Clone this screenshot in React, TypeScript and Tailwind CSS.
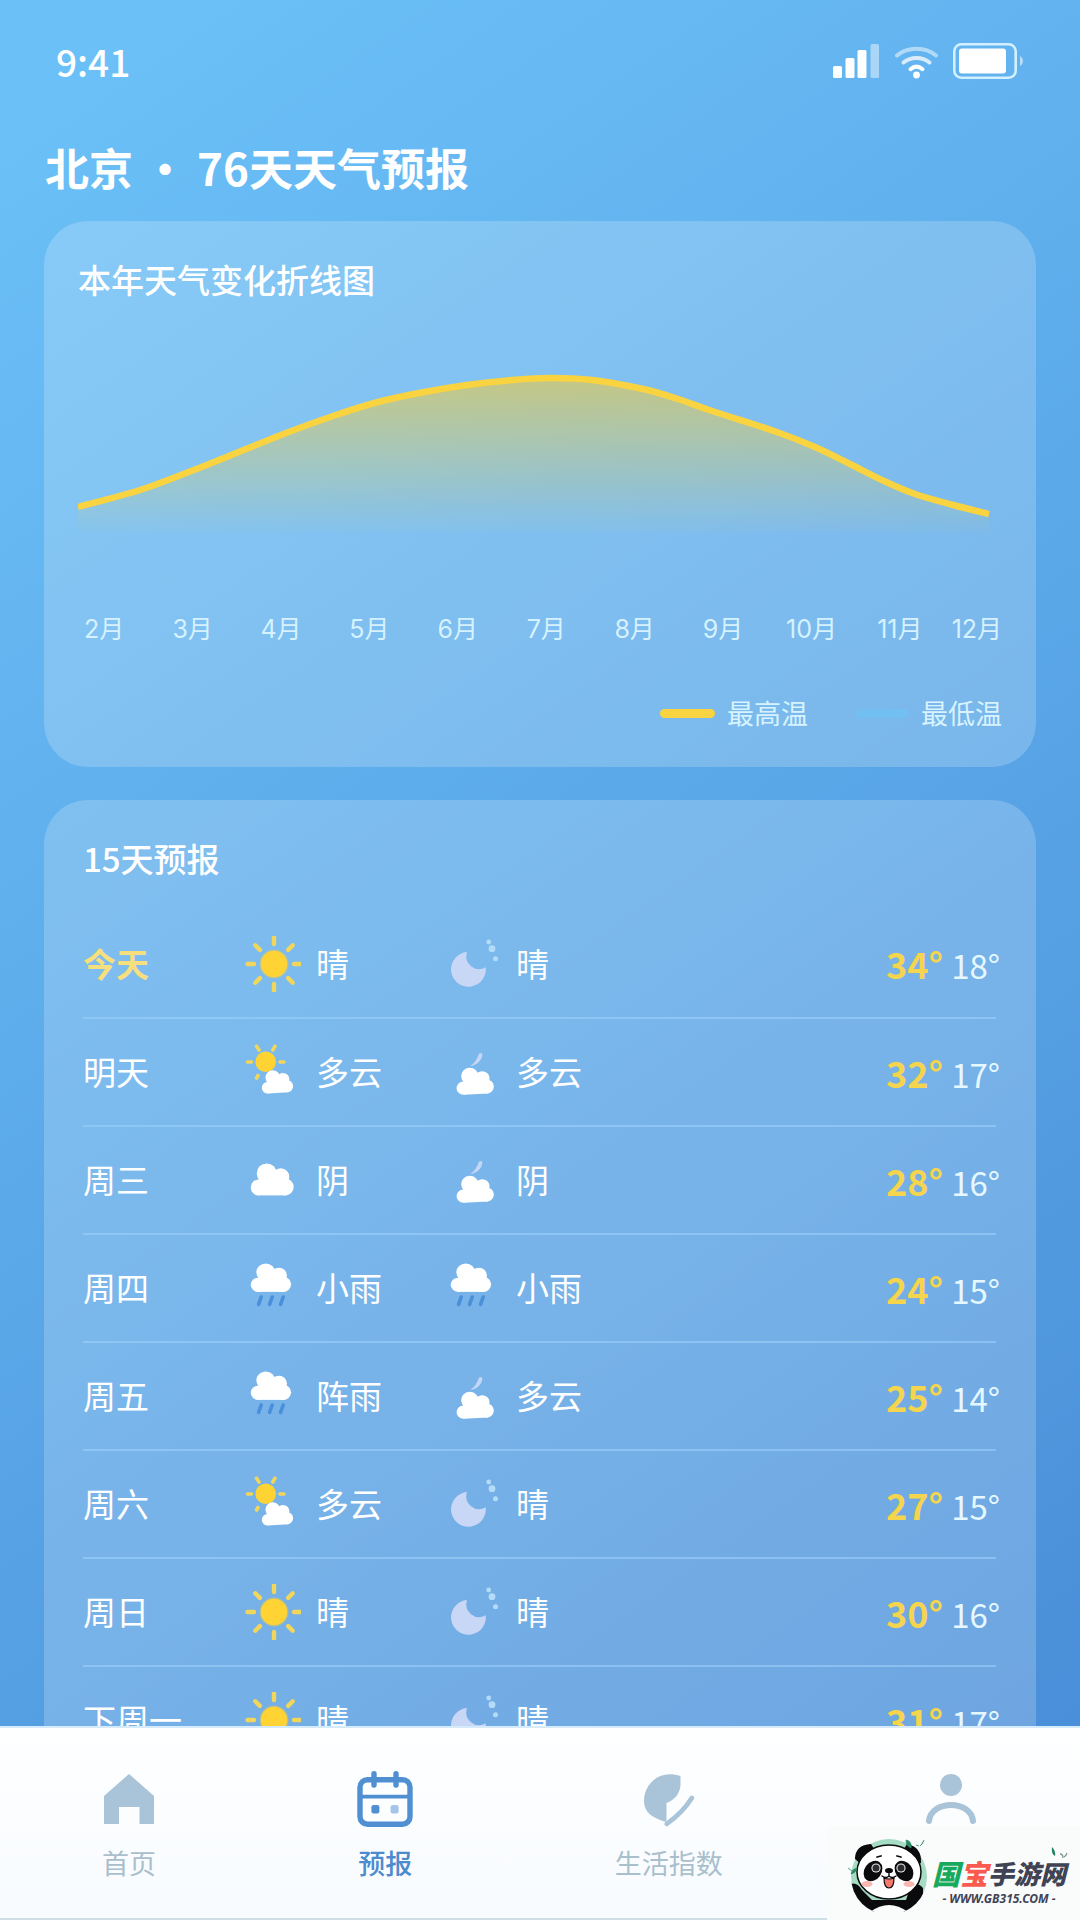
import React from "react";

type Weather = "sunny" | "partly" | "overcast" | "rain" | "clearNight" | "cloudyNight";

const months = ["2月", "3月", "4月", "5月", "6月", "7月", "8月", "9月", "10月", "11月", "12月"];

const highLine = [
  [0, 207], [65, 189], [131, 164], [203, 135], [255, 116], [300, 102], [341, 93], [389, 85],
  [434, 80], [472, 78], [514, 80], [565, 89], [600, 99], [634, 111], [696, 131], [737, 147],
  [772, 164], [806, 181], [837, 194], [875, 205], [911, 214],
];

const forecast: { day: string; icon: Weather; text: string; nightIcon: Weather; nightText: string; high: number; low: number }[] = [
  { day: "今天", icon: "sunny", text: "晴", nightIcon: "clearNight", nightText: "晴", high: 34, low: 18 },
  { day: "明天", icon: "partly", text: "多云", nightIcon: "cloudyNight", nightText: "多云", high: 32, low: 17 },
  { day: "周三", icon: "overcast", text: "阴", nightIcon: "cloudyNight", nightText: "阴", high: 28, low: 16 },
  { day: "周四", icon: "rain", text: "小雨", nightIcon: "rain", nightText: "小雨", high: 24, low: 15 },
  { day: "周五", icon: "rain", text: "阵雨", nightIcon: "cloudyNight", nightText: "多云", high: 25, low: 14 },
  { day: "周六", icon: "partly", text: "多云", nightIcon: "clearNight", nightText: "晴", high: 27, low: 15 },
  { day: "周日", icon: "sunny", text: "晴", nightIcon: "clearNight", nightText: "晴", high: 30, low: 16 },
  { day: "下周一", icon: "sunny", text: "晴", nightIcon: "clearNight", nightText: "晴", high: 31, low: 17 },
];

// smooth curve through the points
function toPath(pts: number[][]) {
  let d = `M${pts[0][0]} ${pts[0][1]}`;
  for (let i = 0; i < pts.length - 1; i++) {
    const p0 = pts[i - 1] || pts[i];
    const p1 = pts[i];
    const p2 = pts[i + 1];
    const p3 = pts[i + 2] || p2;
    d += ` C${p1[0] + (p2[0] - p0[0]) / 6} ${p1[1] + (p2[1] - p0[1]) / 6} ${p2[0] - (p3[0] - p1[0]) / 6} ${p2[1] - (p3[1] - p1[1]) / 6} ${p2[0]} ${p2[1]}`;
  }
  return d;
}

function Cloud({ transform }: { transform: string }) {
  return (
    <g transform={transform} fill="#fff">
      <circle cx="8" cy="24" r="8" />
      <circle cx="16" cy="10" r="10" />
      <circle cx="30" cy="13.5" r="8.6" />
      <circle cx="34.5" cy="23.5" r="8.5" />
      <path d="M8 14H36V32H8Z" />
    </g>
  );
}

function WeatherIcon({ type }: { type: Weather }) {
  return (
    <svg className="h-14 w-14 shrink-0" viewBox="0 0 56 56" fill="none" aria-hidden="true">
      {type === "sunny" && (
        <>
          <circle cx="29" cy="28" r="14.5" fill="#ffd334" opacity="0.4" />
          <circle cx="29" cy="28" r="13.2" fill="#ffd334" />
          {[0, 45, 90, 135, 180, 225, 270, 315].map((a) => (
            <path key={a} d="M29 1.5V8" stroke="#f1d65c" strokeWidth="4.4" strokeLinecap="round" transform={`rotate(${a} 29 28)`} />
          ))}
        </>
      )}
      {type === "partly" && (
        <>
          <circle cx="20.7" cy="17.7" r="10.3" fill="#ffd334" />
          <path
            d="M2.5 18H6.5M35 18H39M11.5 2.2L14 6M30 2.2L27.8 6M13 31.5L11.6 34"
            stroke="#f1d65c"
            strokeWidth="3.6"
            strokeLinecap="round"
          />
          <Cloud transform="translate(15.6 27) rotate(-4) scale(.73 .72)" />
        </>
      )}
      {type === "overcast" && <Cloud transform="translate(5.7 11.4)" />}
      {type === "rain" && (
        <>
          <Cloud transform="translate(5.7 3.4) scale(.94 .89)" />
          <path d="M16.2 37L13.6 44.4M27.2 37L24.6 44.4M38.2 37L35.6 44.4" stroke="#4a8fd9" strokeWidth="3.6" strokeLinecap="round" />
        </>
      )}
      {type === "clearNight" && (
        <>
          <path d="M22 16A17.4 17.4 0 1 0 40.7 31.3A12.9 12.9 0 0 1 22 16Z" fill="#c9d7f6" />
          <g fill="#b4dcf9">
            <circle cx="43.7" cy="6" r="2.4" />
            <circle cx="47" cy="12.7" r="3.4" />
            <circle cx="50.5" cy="22.8" r="2.5" />
          </g>
        </>
      )}
      {type === "cloudyNight" && (
        <>
          <path d="M37 9C38.6 13 34 21.5 25 22C29.5 19.5 32.4 15 34 9.6Z" fill="#c3d6f6" />
          <Cloud transform="translate(10.5 24.6) rotate(-3) scale(.87 .83)" />
        </>
      )}
    </svg>
  );
}

function StatusBar() {
  return (
    <div className="flex h-[121px] items-center justify-between px-14">
      <span className="text-[37px] font-medium leading-10">9:41</span>
      <div className="flex items-center gap-[15px]">
        <svg width="47" height="36" viewBox="0 0 47 36" fill="#fff" aria-hidden="true">
          <rect y="23" width="9" height="12" rx="1.5" />
          <rect x="12.5" y="15" width="9" height="20" rx="1.5" />
          <rect x="24.5" y="7" width="9" height="28" rx="1.5" />
          <rect x="37.5" y="1" width="8.5" height="34" rx="1.5" opacity="0.45" />
        </svg>
        <svg width="43" height="36" viewBox="0 0 43 36" fill="none" stroke="#fff" strokeWidth="4" strokeLinecap="round" aria-hidden="true">
          <path d="M2 12.5C13 3.5 30 3.5 41 12.5" opacity="0.5" />
          <path d="M8.5 19.5C16 13.5 27 13.5 34.5 19.5" opacity="0.75" />
          <path d="M15.5 26.2C19.5 22.8 23.5 22.8 27.5 26.2" />
          <circle cx="21.5" cy="32" r="3.4" fill="#fff" stroke="none" />
        </svg>
        <svg width="71" height="36" viewBox="0 0 71 36" aria-hidden="true">
          <rect x="1.3" y="1.3" width="61.4" height="33.4" rx="7" fill="none" stroke="#d3f0ff" strokeWidth="2.6" />
          <rect x="6" y="5.5" width="47" height="25" rx="3" fill="#fff" />
          <path d="M67 13C71 15 71 21 67 23Z" fill="#b5dcf8" />
        </svg>
      </div>
    </div>
  );
}

function YearChart() {
  const line = toPath(highLine);
  return (
    <section className="rounded-[44px] bg-white/20 pb-9 pt-[38px]">
      <h2 className="pl-[34px] text-[33px] font-medium leading-10">本年天气变化折线图</h2>
      <div className="px-[34px] pt-px">
        <svg className="block w-full" viewBox="0 0 924 311" aria-hidden="true">
          <defs>
            <linearGradient id="high" x1="0" y1="78" x2="0" y2="233" gradientUnits="userSpaceOnUse">
              <stop offset="0" stopColor="#ffcc28" stopOpacity="0.54" />
              <stop offset="1" stopColor="#ffd334" stopOpacity="0.02" />
            </linearGradient>
          </defs>
          <path d={`${line} V233 H0 Z`} fill="url(#high)" />
          <path d={line} fill="none" stroke="#fad341" strokeWidth="6.5" />
        </svg>
      </div>
      <div className="flex pl-4 pr-[34px] pt-0.5 font-['Inter','Noto_Sans_CJK_SC',sans-serif] text-[25px] leading-8 text-[#d6f2ff]">
        {months.map((m) => (
          <span key={m} className="flex-1 text-center last:w-[58px] last:flex-none last:text-right">
            {m}
          </span>
        ))}
      </div>
      <div className="mt-[50px] flex justify-end gap-12 pr-[34px] text-[27px] leading-9 text-[#d6f3ff]">
        <span className="flex items-center gap-3">
          <i className="h-[9px] w-[55px] rounded-full bg-[#fad341]" />
          最高温
        </span>
        <span className="flex items-center gap-3">
          <i className="h-[9px] w-[53px] rounded-full bg-[#72c0f2]" />
          最低温
        </span>
      </div>
    </section>
  );
}

function ForecastList() {
  return (
    <section className="rounded-[44px] bg-white/20 pb-10 pl-[39px] pr-10 pt-[38px]">
      <h2 className="text-[33px] font-medium leading-10">15天预报</h2>
      <table className="mt-8 w-full table-fixed text-left text-[33px]">
        <tbody>
          {forecast.map((f, i) => (
            <tr key={f.day} className="h-[108px] border-b-2 border-[#9dd0f8]/60">
              <th scope="row" className={i === 0 ? "w-[162px] font-bold text-[#f8df7d]" : "w-[162px] font-normal"}>
                {f.day}
              </th>
              <td className="w-[200px]">
                <div className="flex items-center gap-[15px]">
                  <WeatherIcon type={f.icon} />
                  {f.text}
                </div>
              </td>
              <td className="w-[200px]">
                <div className="flex items-center gap-[15px]">
                  <WeatherIcon type={f.nightIcon} />
                  {f.nightText}
                </div>
              </td>
              <td>
                <div className="-mr-1 flex items-baseline justify-end gap-2">
                  <span className="text-[36px] font-bold text-[#f5d44e]">{f.high}°</span>
                  <span className="text-[#e6f8ff]">{f.low}°</span>
                </div>
              </td>
            </tr>
          ))}
        </tbody>
      </table>
    </section>
  );
}

function TabBar() {
  return (
    <nav className="flex shrink-0 items-start justify-between border-y-2 border-t-[#d5eafa] border-b-[#cfdfe6] bg-linear-to-b from-[#feffff] to-[#f8fbff] px-[102px] pb-[37px] pt-[43px] text-[27px] leading-9 text-[#a9bfcc]">
      <button className="flex flex-col items-center gap-[18px]">
        <svg className="h-14" viewBox="0 -3 50 56" fill="#a9c3d8" aria-hidden="true">
          <path d="M25 0L50 22V50H35.5V33H15V50H0V22Z" />
        </svg>
        首页
      </button>
      <button className="flex flex-col items-center gap-[18px] font-medium text-[#4c8bcd]">
        <svg className="h-14" viewBox="0 0 56 56" fill="none" stroke="#4f8fd2" aria-hidden="true">
          <rect x="3" y="8.7" width="50" height="44.5" rx="7.5" strokeWidth="5.4" />
          <path d="M17 2.8V14M39 2.8V14" strokeWidth="5.4" strokeLinecap="round" />
          <path d="M4 25.7H52" strokeWidth="3.8" />
          <rect x="14.4" y="34" width="8" height="8.4" rx="2.2" fill="#4f8fd2" stroke="none" />
          <rect x="33.6" y="34" width="8" height="8.4" rx="2.2" fill="#a4c5e9" stroke="none" />
        </svg>
        预报
      </button>
      <button className="flex flex-col items-center gap-[18px]">
        <svg className="h-14" viewBox="-3 -2 56 56" fill="none" aria-hidden="true">
          <path d="M36.5 3V12C36 20 31 27 22.5 30V49C8 45 0 39 0 28C0 12 14 -4 36.5 3Z" fill="#a9c3d8" />
          <path d="M47.8 25C41 36 31 45 22.8 50.8" stroke="#a9c3d8" strokeWidth="4.7" strokeLinecap="round" />
        </svg>
        生活指数
      </button>
      <button aria-label="我的" className="flex w-[54px] justify-center">
        <svg className="h-14" viewBox="0 -3 50 56" fill="none" aria-hidden="true">
          <circle cx="25" cy="11" r="11" fill="#a9c3d8" />
          <path d="M3 47C5 25.5 45 25.5 47 47" stroke="#a9c3d8" strokeWidth="6" strokeLinecap="round" />
        </svg>
      </button>
    </nav>
  );
}

function Panda() {
  return (
    <svg className="h-[78px] w-[82px] shrink-0" viewBox="0 0 82 78" aria-hidden="true">
      <defs>
        <clipPath id="disc">
          <circle cx="43" cy="39" r="38" />
        </clipPath>
      </defs>
      <g clipPath="url(#disc)">
        <path d="M0 0H82V70H0Z" fill="#a5dcc3" />
        <path d="M5 46Q11 44 16 52L26 62H60L64 50Q70 42 77 50V66L60 76Q43 62 26 76L5 66Z" fill="#0b0b0d" />
        <path d="M24 74Q43 60 62 74V78H24Z" fill="#fafbfb" />
      </g>
      <path d="M9 21Q9 7 25 6L30 14L16 27ZM61 6Q76 9 75 25L69 28L56 14Z" fill="#0b0b0d" />
      <ellipse cx="43" cy="34" rx="32" ry="27" fill="#fff" stroke="#0b0b0d" strokeWidth="1.5" />
      <ellipse cx="27" cy="33" rx="8.5" ry="11" fill="#0b0b0d" transform="rotate(35 27 33)" />
      <ellipse cx="58" cy="33" rx="8.5" ry="11" fill="#0b0b0d" transform="rotate(-35 58 33)" />
      <circle cx="30" cy="30" r="4.6" fill="#e9e9ea" />
      <circle cx="55" cy="30" r="4.6" fill="#e9e9ea" />
      <circle cx="30" cy="30" r="3.5" fill="#2c2c31" />
      <circle cx="55" cy="30" r="3.5" fill="#2c2c31" />
      <ellipse cx="21" cy="46" rx="5.5" ry="3" fill="#f9b5b0" />
      <ellipse cx="63" cy="46" rx="5.5" ry="3" fill="#f9b5b0" />
      <ellipse cx="43" cy="32.5" rx="4" ry="2.6" fill="#0b0b0d" />
      <path d="M43 35V38M36 38Q40 41 43 38Q46 41 50 38" fill="none" stroke="#0b0b0d" strokeWidth="1.4" strokeLinecap="round" />
      <path d="M38 40Q43 42 48 40Q48 50 43 50Q38 50 38 40Z" fill="#f5796c" stroke="#0b0b0d" strokeWidth="1.2" />
      <path d="M31 19L35 18M51 18L55 19" stroke="#0b0b0d" strokeWidth="1.8" strokeLinecap="round" />
      <path d="M60 2Q66 3 65 10Q60 8 60 2ZM70 7L73 8M78 2Q77 6 74 8M2 30L6 33M11 30Q10 35 5 36Q6 31 11 30Z" fill="#2a8a66" stroke="#2a8a66" strokeWidth="0.8" />
    </svg>
  );
}

function SiteBadge() {
  return (
    <a
      href="#"
      className="absolute bottom-0 right-0 flex h-[94px] w-[253px] items-center gap-1 bg-[#fafbfb] pl-[19px] pt-2 text-[#3f4354]"
    >
      <Panda />
      <span className="flex flex-col items-center pt-3">
        <span className="flex items-center whitespace-nowrap text-[26px] font-black italic leading-8">
          <span className="text-[28px] text-[#17a95c]">国</span>
          <span className="text-[28px] text-[#fb5b4e]">宝</span>
          手游网
        </span>
        <span className="whitespace-nowrap font-['Noto_Sans',sans-serif] text-[12px] font-bold italic leading-5">
          - WWW.GB315.COM -
        </span>
      </span>
      <svg className="absolute right-3 top-5" width="18" height="14" viewBox="0 0 18 14" aria-hidden="true">
        <path d="M2 1Q6 5 5 10Q1 8 2 1Z" fill="#23825f" />
        <path d="M10 8Q13 8 13 12M17 7Q16 10 14 11" fill="none" stroke="#7d9a8f" strokeWidth="1.3" />
      </svg>
    </a>
  );
}

export default function App() {
  return (
    <div className="relative flex h-screen flex-col overflow-hidden bg-[linear-gradient(145deg,#6bc0f7_5%,#4a8fd9_92%)] font-['Noto_Sans_CJK_SC',sans-serif] text-white">
      <main className="min-h-0 flex-1 overflow-y-auto [scrollbar-width:none]">
        <StatusBar />
        <h1 className="mb-2 pl-[45px] text-[44px] font-bold leading-[92px]">北京 ・ 76天天气预报</h1>
        <div className="flex flex-col gap-[33px] px-11 pb-11">
          <YearChart />
          <ForecastList />
        </div>
      </main>
      <TabBar />
      <SiteBadge />
    </div>
  );
}
